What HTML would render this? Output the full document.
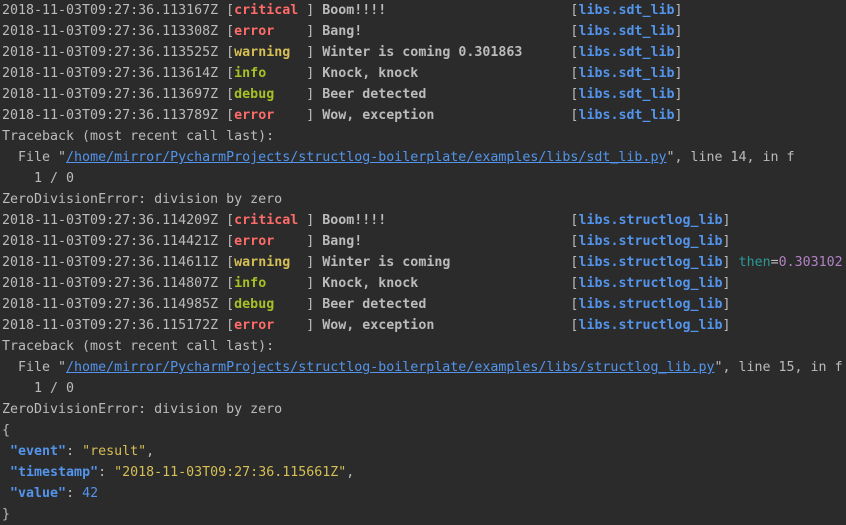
<!DOCTYPE html>
<html><head><style>
html,body{margin:0;padding:0;background:#2b2b2b;width:846px;height:521px;overflow:hidden}
pre{margin:0;position:absolute;top:0px;left:2px;font-family:"DejaVu Sans Mono","Liberation Mono",monospace;font-size:13.3px;line-height:21px;color:#bbbbbb;white-space:pre}
.r{color:#ff6b68}.y{color:#d6bf55}.g{color:#a8c023}.b{color:#5394ec;font-weight:bold}.k{color:#299999}.p{color:#b381c5}.l{color:#5394ec;text-decoration:underline}.n{color:#5394ec}.s{color:#d6bf55}.w{font-weight:bold}.bl{color:#5394ec;font-weight:bold}
</style></head><body><pre>2018-11-03T09:27:36.113167Z [<span class="r w">critical</span> ] <span class="w">Boom!!!!</span>                       [<span class="b">libs.sdt_lib</span>]
2018-11-03T09:27:36.113308Z [<span class="r w">error</span>    ] <span class="w">Bang!</span>                          [<span class="b">libs.sdt_lib</span>]
2018-11-03T09:27:36.113525Z [<span class="y w">warning</span>  ] <span class="w">Winter is coming 0.301863</span>      [<span class="b">libs.sdt_lib</span>]
2018-11-03T09:27:36.113614Z [<span class="g w">info</span>     ] <span class="w">Knock, knock</span>                   [<span class="b">libs.sdt_lib</span>]
2018-11-03T09:27:36.113697Z [<span class="g w">debug</span>    ] <span class="w">Beer detected</span>                  [<span class="b">libs.sdt_lib</span>]
2018-11-03T09:27:36.113789Z [<span class="r w">error</span>    ] <span class="w">Wow, exception</span>                 [<span class="b">libs.sdt_lib</span>]
Traceback (most recent call last):
  File "<span class="l">/home/mirror/PycharmProjects/structlog-boilerplate/examples/libs/sdt_lib.py</span>", line 14, in f
    1 / 0
ZeroDivisionError: division by zero
2018-11-03T09:27:36.114209Z [<span class="r w">critical</span> ] <span class="w">Boom!!!!</span>                       [<span class="b">libs.structlog_lib</span>]
2018-11-03T09:27:36.114421Z [<span class="r w">error</span>    ] <span class="w">Bang!</span>                          [<span class="b">libs.structlog_lib</span>]
2018-11-03T09:27:36.114611Z [<span class="y w">warning</span>  ] <span class="w">Winter is coming</span>               [<span class="b">libs.structlog_lib</span>] <span class="k">then</span>=<span class="p">0.303102</span>
2018-11-03T09:27:36.114807Z [<span class="g w">info</span>     ] <span class="w">Knock, knock</span>                   [<span class="b">libs.structlog_lib</span>]
2018-11-03T09:27:36.114985Z [<span class="g w">debug</span>    ] <span class="w">Beer detected</span>                  [<span class="b">libs.structlog_lib</span>]
2018-11-03T09:27:36.115172Z [<span class="r w">error</span>    ] <span class="w">Wow, exception</span>                 [<span class="b">libs.structlog_lib</span>]
Traceback (most recent call last):
  File "<span class="l">/home/mirror/PycharmProjects/structlog-boilerplate/examples/libs/structlog_lib.py</span>", line 15, in f
    1 / 0
ZeroDivisionError: division by zero
{
 <span class="bl">"event"</span>: <span class="s">"result"</span>,
 <span class="bl">"timestamp"</span>: <span class="s">"2018-11-03T09:27:36.115661Z"</span>,
 <span class="bl">"value"</span>: <span class="n">42</span>
}</pre></body></html>
